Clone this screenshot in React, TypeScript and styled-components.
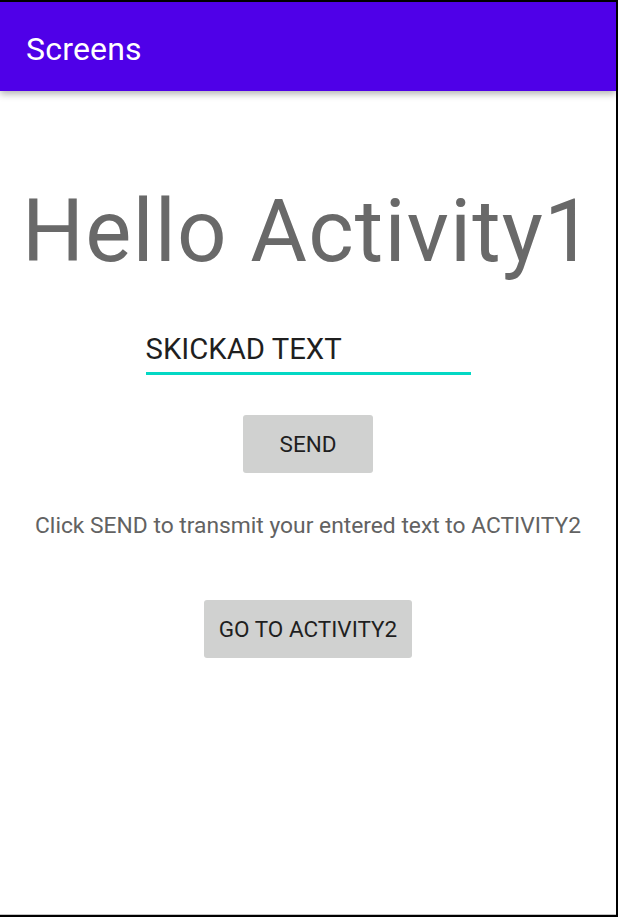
import React from 'react';
import styled, { createGlobalStyle } from 'styled-components';

const GlobalStyle = createGlobalStyle`
  html, body {
    margin: 0;
    padding: 0;
    background: #ffffff;
  }
  body {
    font-family: Roboto, "Liberation Sans", Arial, sans-serif;
  }
`;

const Screen = styled.div`
  width: 618px;
  height: 917px;
  box-sizing: border-box;
  border-top: 2px solid #000;
  border-right: 2px solid #000;
  border-bottom: 2px solid #000;
  background: #fff;
  display: flex;
  flex-direction: column;
  overflow: hidden;
`;

const AppBar = styled.header`
  height: 89px;
  box-sizing: border-box;
  flex-shrink: 0;
  background: #4f00e8;
  color: #fff;
  display: flex;
  align-items: center;
  padding: 5px 0 0 26px;
  box-shadow: 0 3px 7px rgba(0, 0, 0, 0.3);
  position: relative;
  z-index: 1;
`;

const Title = styled.h1`
  margin: 0;
  font-weight: 400;
  font-size: 32px;
  letter-spacing: 0.2px;
`;

const Body = styled.main`
  flex: 1;
  display: flex;
  flex-direction: column;
  align-items: center;
  border-bottom: 1px solid #c4c4c4;
`;

const Hello = styled.div`
  margin-top: 97px;
  font-size: 87px;
  line-height: 1;
  letter-spacing: 1.1px;
  color: #696969;
  filter: blur(0.4px);
  white-space: nowrap;
`;

const Field = styled.div`
  margin-top: 57px;
  width: 325px;
  padding-bottom: 6px;
  border-bottom: 3px solid #03d8c4;
  font-size: 29.3px;
  line-height: 34px;
  color: #1f1f1f;
`;

const Button = styled.button<{ $pad: number }>`
  height: 58px;
  padding: 0 ${(p) => p.$pad}px;
  border: none;
  border-radius: 3px;
  background: #d0d1d0;
  color: #1f1f1f;
  font-family: Roboto, "Liberation Sans", Arial, sans-serif;
  font-size: 22.5px;
  font-weight: 400;
`;

const Hint = styled.p`
  margin: 39px 0 0;
  font-size: 22.8px;
  color: #626262;
  white-space: nowrap;
`;

const SendRow = styled.div`
  margin-top: 40px;
`;

const GoRow = styled.div`
  margin-top: 61px;
`;

export default function App() {
  return (
    <>
      <GlobalStyle />
      <Screen>
        <AppBar>
          <Title>Screens</Title>
        </AppBar>
        <Body>
          <Hello>Hello Activity1</Hello>
          <Field>SKICKAD TEXT</Field>
          <SendRow>
            <Button $pad={37}>SEND</Button>
          </SendRow>
          <Hint>Click SEND to transmit your entered text to ACTIVITY2</Hint>
          <GoRow>
            <Button $pad={15}>GO TO ACTIVITY2</Button>
          </GoRow>
        </Body>
      </Screen>
    </>
  );
}
